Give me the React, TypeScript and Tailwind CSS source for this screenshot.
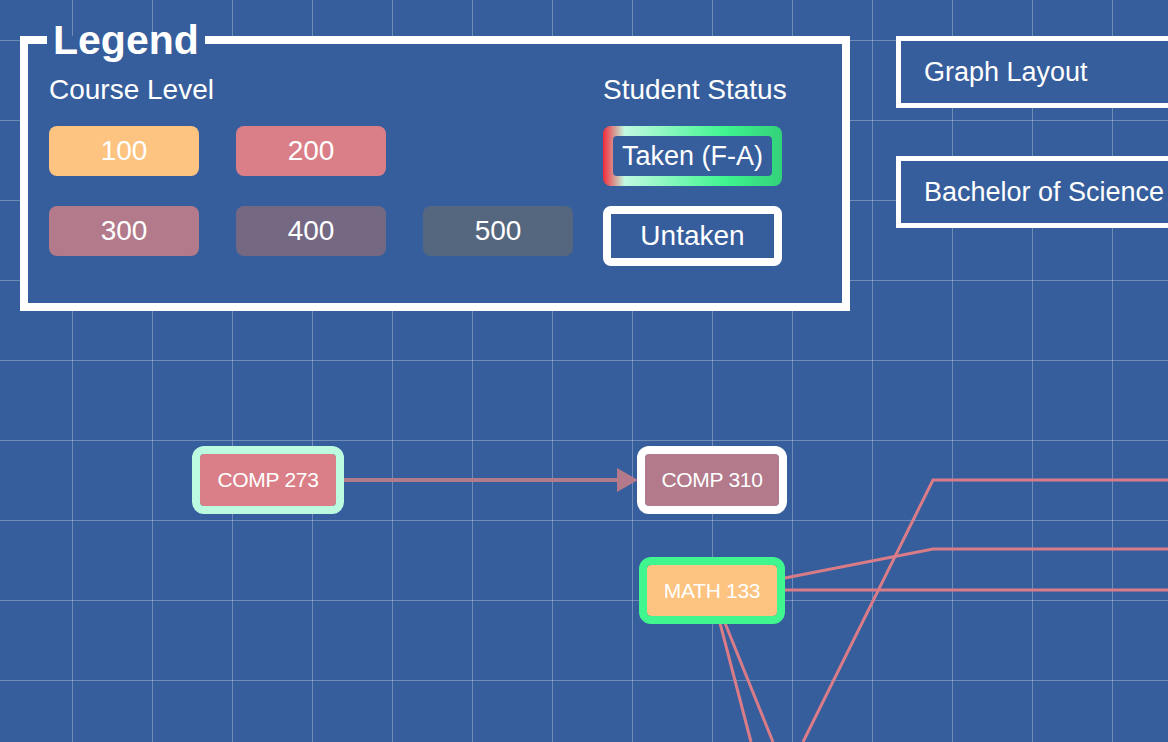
import React from 'react';

const levels = [
  { label: '100', color: 'bg-[#fcc381]' },
  { label: '200', color: 'bg-[#da7f88]' },
  { label: '300', color: 'bg-[#b27a8b]' },
  { label: '400', color: 'bg-[#746883]' },
  { label: '500', color: 'bg-[#54677f]' },
];

function CourseNode({
  code,
  left,
  top,
  width,
  height,
  border,
  fill,
}: {
  code: string;
  left: number;
  top: number;
  width: number;
  height: number;
  border: string;
  fill: string;
}) {
  return (
    <div
      className={`absolute flex items-center justify-center rounded-[12px] border-8 bg-clip-padding text-[21px] tracking-[-0.3px] text-white ${border} ${fill}`}
      style={{ left, top, width, height }}
    >
      {code}
    </div>
  );
}

export default function App() {
  return (
    <div className="relative h-screen w-screen overflow-hidden bg-[#375e9c] bg-[linear-gradient(to_right,rgba(255,255,255,0.28)_1px,transparent_1px),linear-gradient(to_bottom,rgba(255,255,255,0.28)_1px,transparent_1px)] bg-[size:80px_80px] bg-[position:72px_40px] font-['Liberation_Sans',Arial,sans-serif] text-white">
      {/* graph canvas */}
      <div className="absolute inset-0">
        <svg className="absolute inset-0" width="1168" height="742">
          <g stroke="#d97c87" strokeWidth="3" fill="none">
            <polyline points="803,742 933,480 1168,480" />
            <polyline points="785,578 933,549 1168,549" />
            <line x1="785" y1="590" x2="1168" y2="590" />
            <line x1="720" y1="623" x2="751" y2="742" />
            <line x1="725" y1="623" x2="773" y2="742" />
          </g>
          <line x1="344" y1="480" x2="620" y2="480" stroke="#b27a8b" strokeWidth="4" />
          <polygon points="617,468 617,492 638,480" fill="#b27a8b" />
        </svg>
        <CourseNode code="COMP 273" left={192} top={446} width={152} height={68} border="border-[#bdfbe0]" fill="bg-[#da7f88]" />
        <CourseNode code="COMP 310" left={637} top={446} width={150} height={68} border="border-white" fill="bg-[#b27a8b]" />
        <CourseNode code="MATH 133" left={639} top={557} width={146} height={67} border="border-[#40f78f]" fill="bg-[#fcc381]" />
      </div>

      {/* overlays */}
      <div className="relative z-10 flex gap-[46px] pl-[20px] pt-[20px]">
        <fieldset className="w-[830px] shrink-0 border-8 border-white bg-[#375e9c] pb-[37px] pl-[21px] pr-0 pt-[15px]">
          <legend className="ml-[-2px] px-[6px] text-[41px] leading-[40px] font-bold">Legend</legend>
          <div className="flex gap-[30px]">
            <div>
              <div className="text-[28px] leading-[30px]">Course Level</div>
              <div className="mt-[21px] grid grid-cols-[150px_150px_150px] gap-x-[37px] gap-y-[30px]">
                {levels.slice(0, 2).map((l) => (
                  <div key={l.label} className={`flex h-[50px] items-center justify-center rounded-[8px] text-[28px] ${l.color}`}>
                    {l.label}
                  </div>
                ))}
                <div />
                {levels.slice(2).map((l) => (
                  <div key={l.label} className={`flex h-[50px] items-center justify-center rounded-[8px] text-[28px] ${l.color}`}>
                    {l.label}
                  </div>
                ))}
              </div>
            </div>
            <div className="w-[179px]">
              <div className="whitespace-nowrap text-[28px] leading-[30px]">Student Status</div>
              <div className="mt-[21px] flex flex-col gap-[20px]">
                <div className="h-[60px] rounded-[8px] bg-[linear-gradient(to_right,#f22b3a_0%,#c2f9e1_12%,#40f590_68%,#33d27a_100%)] p-[10px]">
                  <div className="flex h-full items-center justify-center whitespace-nowrap rounded-[4px] bg-[#375e9c] text-[27px]">
                    Taken (F-A)
                  </div>
                </div>
                <div className="flex h-[60px] items-center justify-center rounded-[8px] border-8 border-white text-[28px]">
                  Untaken
                </div>
              </div>
            </div>
          </div>
        </fieldset>

        <div className="flex flex-col gap-[48px] pt-[16px]">
          <button className="flex h-[72px] w-[320px] shrink-0 items-center border-[5px] border-white bg-[#375e9c] pl-[23px] text-[27px] text-white">
            Graph Layout
          </button>
          <button className="flex h-[72px] w-[320px] shrink-0 items-center whitespace-nowrap border-[5px] border-white bg-[#375e9c] pl-[23px] text-[27px] text-white">
            Bachelor of Science
          </button>
        </div>
      </div>
    </div>
  );
}
